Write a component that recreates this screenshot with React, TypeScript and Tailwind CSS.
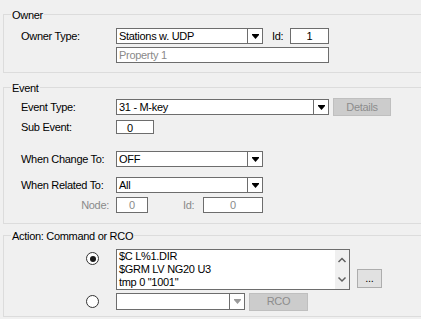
import type { ReactNode } from 'react'

function Group({ title, className, children }: { title: string; className: string; children: ReactNode }) {
  return (
    <div className={`relative ml-[3px] border border-r-0 border-[#dcdcdc] pl-[17px] ${className}`}>
      <span className="absolute left-[7px] top-[-6px] bg-[#f0f0f0] px-[1px] leading-[13px]">{title}</span>
      {children}
    </div>
  )
}

function Arrow({ color = '#000' }: { color?: string }) {
  return (
    <svg width="7" height="5" viewBox="0 0 7 5">
      <polygon points="0,0 7,0 7,1 3.5,5 0,1" fill={color} />
    </svg>
  )
}

function Combo({ value, width, height = 'h-[16px]', disabled = false }: { value: string; width: string; height?: string; disabled?: boolean }) {
  return (
    <div className={`flex ${width} ${height} border border-[#6d6d6d] bg-white`}>
      <div className="flex-1 pl-[2px] leading-[14px]">{value}</div>
      <div className="flex w-[15px] items-center justify-center border-l border-[#6d6d6d]">
        <Arrow color={disabled ? '#9a9a9a' : '#000'} />
      </div>
    </div>
  )
}

function Field({ value, width, height = 'h-[16px]', className = '' }: { value: string; width: string; height?: string; className?: string }) {
  return (
    <div className={`${width} ${height} border border-[#6d6d6d] bg-white leading-[14px] ${className}`}>{value}</div>
  )
}

function Radio({ checked }: { checked: boolean }) {
  return (
    <div className="ml-[65px] flex h-[13px] w-[13px] items-center justify-center rounded-full border border-[#333] bg-white">
      {checked && <div className="h-[6px] w-[6px] rounded-full bg-[#1a1a1a]" />}
    </div>
  )
}

export default function App() {
  return (
    <div
      className="h-[319px] w-[421px] overflow-hidden bg-[#f0f0f0] text-[11px] tracking-[-0.3px] text-black"
      style={{ fontFamily: '"Liberation Sans", Arial, sans-serif' }}
    >
      {/* Owner */}
      <Group title="Owner" className="mt-[14px] pt-[13px] pb-[9px]">
        <div className="flex h-[16px] items-center">
          <span className="w-[95px]">Owner Type:</span>
          <Combo value="Stations w. UDP" width="w-[147px]" />
          <span className="ml-[9px] w-[18px]">Id:</span>
          <Field value="1" width="w-[39px]" className="text-center" />
        </div>
        <div className="mt-[3px] flex">
          <Field value="Property 1" width="w-[213px]" className="ml-[95px] pl-[2px] text-[#8a8a8a]" />
        </div>
      </Group>

      {/* Event */}
      <Group title="Event" className="mt-[14px] pt-[11px] pb-[10px]">
        <div className="flex h-[16px] items-center">
          <span className="w-[95px]">Event Type:</span>
          <Combo value="31 - M-key" width="w-[213px]" />
          <div className="ml-[4px] flex h-[18px] w-[58px] items-center justify-center border border-[#bfbfbf] bg-[#cccccc] text-[#8d8d8d]">
            Details
          </div>
        </div>
        <div className="mt-[5px] flex h-[14px] items-center">
          <span className="w-[95px]">Sub Event:</span>
          <Field value="0" width="w-[38px]" height="h-[14px]" className="pl-[10px] leading-[12px]" />
        </div>
        <div className="mt-[17px] flex h-[16px] items-center">
          <span className="w-[95px]">When Change To:</span>
          <Combo value="OFF" width="w-[147px]" />
        </div>
        <div className="mt-[10px] flex h-[16px] items-center">
          <span className="w-[95px]">When Related To:</span>
          <Combo value="All" width="w-[147px]" />
        </div>
        <div className="mt-[4px] flex h-[16px] items-center text-[#8a8a8a]">
          <span className="w-[95px] pr-[7px] text-right">Node:</span>
          <Field value="0" width="w-[32px]" className="text-center" />
          <span className="ml-[35px] w-[20px]">Id:</span>
          <Field value="0" width="w-[60px]" className="text-center" />
        </div>
      </Group>

      {/* Action */}
      <Group title="Action: Command or RCO" className="mt-[11px] pt-[13px] pb-[6px]">
        <div className="flex items-start">
          <div className="mt-[3px]">
            <Radio checked />
          </div>
          <div className="ml-[17px] flex h-[41px] w-[234px] border border-[#6d6d6d] bg-white">
            <div className="flex-1 pl-[2px] leading-[13px] whitespace-pre">
              {'$C L%1.DIR\n$GRM LV NG20 U3\ntmp 0 "1001"'}
            </div>
            <div className="w-[14px] bg-[#f0f0f0]">
              <svg width="14" height="39" viewBox="0 0 14 39" fill="none" stroke="#606060" strokeWidth="1.5">
                <polyline points="3.5,12 7,8.5 10.5,12" />
                <polyline points="3.5,27.5 7,31 10.5,27.5" />
              </svg>
            </div>
          </div>
          <div className="mt-[20px] ml-[7px] flex h-[19px] w-[25px] items-center justify-center border border-[#adadad] bg-[#e1e1e1]">
            ...
          </div>
        </div>
        <div className="mt-[3px] flex h-[17px] items-center">
          <Radio checked={false} />
          <div className="ml-[17px]">
            <Combo value="" width="w-[129px]" height="h-[17px]" disabled />
          </div>
          <div className="ml-[4px] flex h-[18px] w-[59px] items-center justify-center border border-[#bfbfbf] bg-[#cccccc] text-[#8d8d8d]">
            RCO
          </div>
        </div>
      </Group>
    </div>
  )
}
